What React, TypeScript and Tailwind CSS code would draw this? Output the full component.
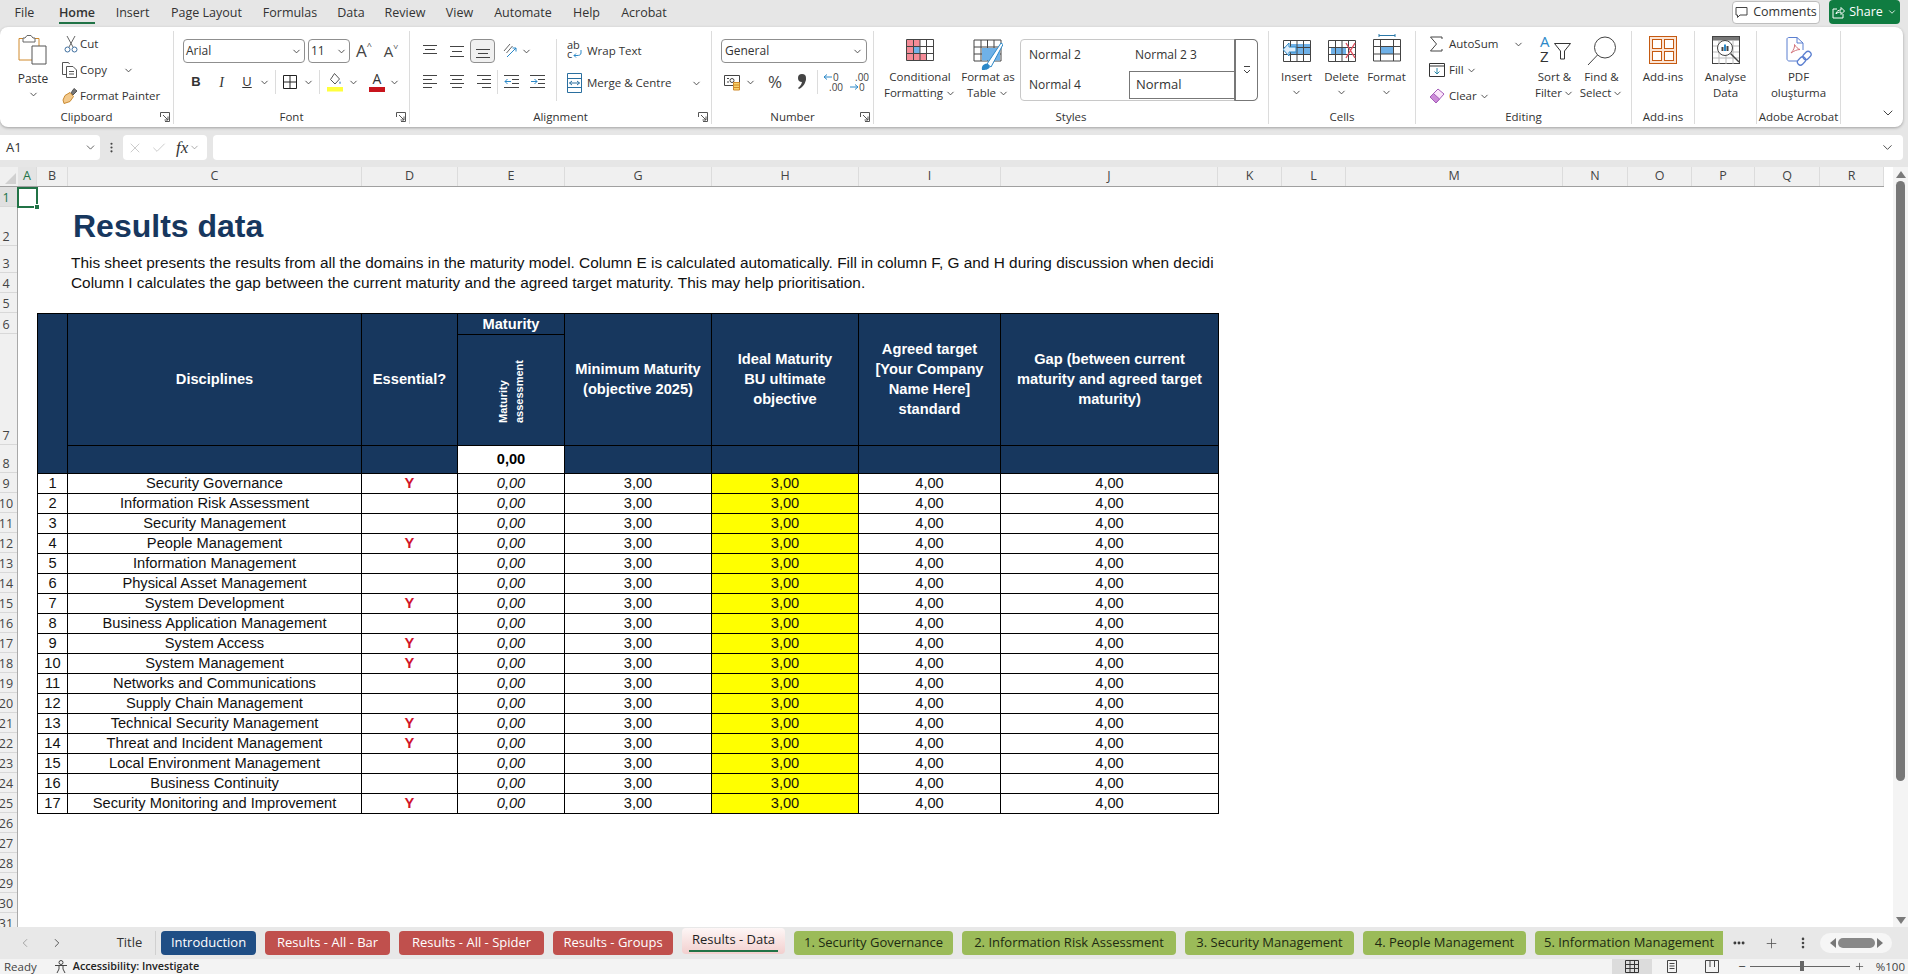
import React from 'react';
import { ChevronDown, ChevronLeft, ChevronRight, Check, X, Plus, MoreVertical, MoreHorizontal } from 'lucide-react';

const ink = '#444';

function Chev({ className = '' }: { className?: string }) {
  return <ChevronDown className={`h-[11px] w-[11px] shrink-0 text-[#444] ${className}`} strokeWidth={2} />;
}

// little box with arrow, bottom right of a ribbon group
function Launcher() {
  return (
    <svg width="10" height="10" viewBox="0 0 10 10" fill="none" stroke="#555" strokeWidth="1">
      <path d="M0.5 5V0.5H9.5V9.5H5" />
      <path d="M3 3L8 8M8 4.5V8H4.5" />
    </svg>
  );
}

function Group({ label, className, launcher, children }: { label?: string; className: string; launcher?: boolean; children: React.ReactNode }) {
  return (
    <div className={`relative my-[4px] flex h-[93px] shrink-0 flex-col border-r border-[#dcdcdc] ${className}`}>
      <div className="h-[79px]">{children}</div>
      <div className="relative flex h-[14px] items-center justify-center text-[11.5px] text-[#333]">
        {label}
        {launcher && (
          <span className="absolute right-[3px] top-[2px]">
            <Launcher />
          </span>
        )}
      </div>
    </div>
  );
}

function Lines({ rows }: { rows: [number, number, number][] }) {
  return (
    <svg width="16" height="16" viewBox="0 0 16 16" stroke={ink} strokeWidth="1">
      {rows.map(([y, a, b], i) => (
        <path key={i} d={`M${a} ${y + 0.5}H${b}`} />
      ))}
    </svg>
  );
}

function Cell3({ children }: { children: React.ReactNode }) {
  return <div className="flex h-[24px] w-[27px] shrink-0 items-center justify-center">{children}</div>;
}

function PasteIcon() {
  return (
    <svg width="30" height="32" viewBox="0 0 30 32" fill="none">
      <path d="M1 4.5H21V26H1Z" fill="#fff" stroke="#d08a2c" />
      <path d="M7 4L9 1.5H13L15 4H17V8H5V4Z" fill="#fff" stroke="#666" />
      <path d="M14 12H28V30H14Z" fill="#fff" stroke="#555" />
    </svg>
  );
}

function CutIcon() {
  return (
    <svg width="14" height="18" viewBox="0 0 14 18" fill="none" stroke="#3f6f9f">
      <path d="M3 1L9 12M11 1L5 12" stroke="#666" />
      <circle cx="3.5" cy="14.5" r="2.5" />
      <circle cx="10.5" cy="14.5" r="2.5" />
    </svg>
  );
}

function CopyIcon() {
  return (
    <svg width="18" height="18" viewBox="0 0 18 18" fill="none" stroke="#555">
      <path d="M1.5 1.5H7.5L8.5 3M1.5 1.5V13.5H5" />
      <path d="M5.5 5.5H12L15.5 9V16.5H5.5Z" fill="#fff" />
      <path d="M8 10.5H13M8 13H13" />
    </svg>
  );
}

function PainterIcon() {
  return (
    <svg width="18" height="18" viewBox="0 0 18 18" fill="none">
      <path d="M10 6L13 1.5L16 4L12 8Z" fill="#777" stroke="#555" />
      <path d="M4 8.5L9 5.5L12.5 9.5L9 14.5L3 16.5L2 13Z" fill="#f3c98b" stroke="#c98a32" />
    </svg>
  );
}

function BorderIcon() {
  return (
    <svg width="16" height="16" viewBox="0 0 16 16" fill="none" stroke="#222">
      <path d="M1.5 1.5H14.5V14.5H1.5ZM8 1.5V14.5M1.5 8H14.5" />
    </svg>
  );
}

function FillIcon() {
  return (
    <svg width="16" height="20" viewBox="0 0 16 20" fill="none">
      <path d="M7.5 1.5L12.5 7L8 12L3.5 7.5Z" fill="#fff" stroke="#555" />
      <path d="M13 9L14 11.5L12 11.5Z" fill="#3f7fbf" />
      <rect x="0" y="15" width="16" height="4.5" fill="#ffff3c" />
    </svg>
  );
}

function FontColorIcon() {
  return (
    <div className="flex h-[22px] w-[16px] flex-col items-center">
      <span className="text-[14px] leading-[15px] text-[#333]">A</span>
      <span className="mt-[1px] h-[5px] w-[16px] bg-[#c8141c]" />
    </div>
  );
}

function OrientIcon() {
  return (
    <svg width="18" height="18" viewBox="0 0 18 18" fill="none">
      <path d="M3 9L9 2M5.5 11L11.5 4" stroke="#666" />
      <path d="M6 15L15 6M15 6H11.5M15 6V9.5" stroke="#2b88c8" />
    </svg>
  );
}

function IndentIcon({ dir }: { dir: 'in' | 'out' }) {
  return (
    <svg width="16" height="16" viewBox="0 0 16 16" fill="none" stroke={ink}>
      <path d="M0 1.5H15M8 5.5H15M8 9.5H15M0 13.5H15" />
      {dir === 'out' ? <path d="M7 7.5H1M3.5 5L1 7.5L3.5 10" stroke="#2b88c8" /> : <path d="M1 7.5H7M4.5 5L7 7.5L4.5 10" stroke="#2b88c8" />}
    </svg>
  );
}

function WrapIcon() {
  return (
    <svg width="15" height="20" viewBox="0 0 15 20" fill="none" fontSize="11" fontFamily="Open Sans, sans-serif">
      <text x="0" y="8" fill="#333">ab</text>
      <text x="0" y="17" fill="#333">c</text>
      <path d="M14 9V12C14 14 12 14.5 10 14.5H7M9 12.5L7 14.5L9 16.5" stroke="#2b88c8" />
    </svg>
  );
}

function MergeIcon() {
  return (
    <svg width="15" height="20" viewBox="0 0 15 20" fill="none" stroke="#2a6f9f">
      <path d="M0.5 0.5H14.5V19.5H0.5ZM0.5 5.5H14.5M0.5 14.5H14.5" />
      <path d="M2.5 10H12.5M5 8L2.5 10L5 12M10 8L12.5 10L10 12" />
    </svg>
  );
}

function MoneyIcon() {
  return (
    <svg width="18" height="18" viewBox="0 0 18 18" fill="none">
      <path d="M0.5 2.5H15.5V12.5H0.5Z" stroke="#444" />
      <path d="M3 5.5H5M3 9H5" stroke="#444" />
      <circle cx="8" cy="7.5" r="2" stroke="#444" />
      <path d="M9.5 9.5H15.5V17H9.5Z" fill="#f7d36b" stroke="#d08a2c" />
      <path d="M9.5 12H15.5M9.5 14.5H15.5" stroke="#d08a2c" />
    </svg>
  );
}

function CommaIcon() {
  return (
    <svg width="10" height="18" viewBox="0 0 10 18" fill="#444">
      <circle cx="5" cy="5" r="4" />
      <path d="M9 5C9 10 6 14 2 16L1 15C4 13 5 10 5 8Z" />
    </svg>
  );
}

function DecimalIcon({ dir }: { dir: 'more' | 'less' }) {
  return (
    <svg width="22" height="22" viewBox="0 0 22 22" fill="none" fontSize="10" fontFamily="Open Sans, sans-serif">
      {dir === 'more' ? (
        <>
          <path d="M10 6H2M5 3.5L2 6L5 8.5" stroke="#2b88c8" />
          <text x="11" y="9.5" fill="#444">0</text>
          <text x="7" y="19.5" fill="#444">.00</text>
        </>
      ) : (
        <>
          <text x="7" y="9.5" fill="#444">.00</text>
          <path d="M2 16H10M7 13.5L10 16L7 18.5" stroke="#2b88c8" />
          <text x="11" y="19.5" fill="#444">0</text>
        </>
      )}
    </svg>
  );
}

function SigmaIcon() {
  return (
    <svg width="14" height="16" viewBox="0 0 14 16" fill="none" stroke="#444">
      <path d="M13 3V1H1.5L7.5 8L1.5 15H13V13" />
    </svg>
  );
}

function GridIcon({ children, over }: { children?: React.ReactNode; over?: React.ReactNode }) {
  return (
    <svg width={28} height={22} viewBox="0 0 28 22" fill="none">
      {children}
      <path d="M0.5 0.5H27.5V21.5H0.5ZM7.5 0.5V21.5M14 0.5V21.5M20.5 0.5V21.5M0.5 7.5H27.5M0.5 14.5H27.5" stroke="#444" />
      {over}
    </svg>
  );
}

function CondIcon() {
  return (
    <GridIcon>
      <rect x="1" y="1" width="13" height="6.5" fill="#f48b97" />
      <rect x="7.5" y="7.5" width="6.5" height="7" fill="#6fb1e8" />
      <rect x="1" y="7.5" width="6.5" height="7" fill="#f48b97" />
      <rect x="1" y="14.5" width="19.5" height="7" fill="#f48b97" />
    </GridIcon>
  );
}

function TableIcon() {
  return (
    <svg width="30" height="32" viewBox="0 0 30 32" fill="none">
      <path d="M1 1H28V22H1ZM8 1V22M14.5 1V22M21 1V22M1 8H28M1 15H28" stroke="#444" />
      <rect x="9" y="9" width="18" height="12.5" fill="#6fb1e8" />
      <path d="M14 25L28 4L30 5.5L18 28Z" fill="#fff" stroke="#2b88c8" />
      <path d="M9 31C8 26 12 24 15 25L17 28C15 31 12 31 9 31Z" fill="#2b88c8" />
    </svg>
  );
}

function InsertIcon() {
  return (
    <GridIcon over={<path d="M6 3L0 9.5L6 16V12H13V7H6Z" fill="#dfeefb" stroke="#2b88c8" />}>
      <rect x="7" y="4" width="21" height="11" fill="#6fb1e8" />
    </GridIcon>
  );
}

function DeleteIcon() {
  return (
    <GridIcon over={<path d="M18 3L27 18M27 3L18 18" stroke="#e2505f" strokeWidth="1.4" />}>
      <rect x="3" y="7" width="15" height="8" fill="#6fb1e8" />
    </GridIcon>
  );
}

function FormatIcon() {
  return (
    <svg width="28" height="28" viewBox="0 0 28 28" fill="none">
      <path d="M6 1.5H22M6 0V3M22 0V3" stroke="#2b78a8" />
      <rect x="7" y="12" width="14" height="8" fill="#6fb1e8" />
      <path d="M0.5 5.5H27.5V27H0.5ZM7.5 5.5V27M20.5 5.5V27M0.5 12.5H27.5M0.5 20H27.5" stroke="#444" />
    </svg>
  );
}

function FillDownIcon() {
  return (
    <svg width="16" height="14" viewBox="0 0 16 14" fill="none">
      <path d="M0.5 0.5H15.5V13.5H0.5ZM0.5 3H15.5" stroke="#333" />
      <path d="M8 5V11M5.5 8.5L8 11L10.5 8.5" stroke="#2b88a8" />
    </svg>
  );
}

function EraserIcon() {
  return (
    <svg width="16" height="16" viewBox="0 0 16 16" fill="none">
      <path d="M1 9L9 1L15 6L7 15Z" fill="#fbe6fb" stroke="#a45cb8" />
      <path d="M1 9L4.5 5.5L10.5 11L7 15Z" fill="#cc8ad8" stroke="#a45cb8" />
    </svg>
  );
}

function SortIcon() {
  return (
    <svg width="32" height="28" viewBox="0 0 32 28" fill="none" fontSize="15" fontFamily="Open Sans, sans-serif">
      <text x="1" y="11" fill="#2b88c8">A</text>
      <text x="1" y="26" fill="#333">Z</text>
      <path d="M15.5 7.5H31.5L25.5 15V23H21.5V15Z" stroke="#333" />
    </svg>
  );
}

function FindIcon() {
  return (
    <svg width="30" height="30" viewBox="0 0 30 30" fill="none" stroke="#444">
      <circle cx="18" cy="11.5" r="10.5" />
      <path d="M10.5 19L1 29" />
    </svg>
  );
}

function AddinsIcon() {
  return (
    <svg width="28" height="28" viewBox="0 0 28 28" fill="none">
      <rect x="0.5" y="0.5" width="27" height="27" fill="#fbe5d6" stroke="#c55a11" />
      <rect x="3.5" y="3.5" width="9" height="9" fill="#fff" stroke="#c55a11" />
      <rect x="15.5" y="3.5" width="9" height="9" fill="#fff" stroke="#c55a11" />
      <rect x="3.5" y="15.5" width="9" height="9" fill="#fff" stroke="#c55a11" />
      <rect x="15.5" y="15.5" width="9" height="9" fill="#fff" stroke="#c55a11" />
    </svg>
  );
}

function AnalyseIcon() {
  return (
    <svg width="28" height="28" viewBox="0 0 28 28" fill="none">
      <rect x="0.5" y="0.5" width="27" height="27" stroke="#444" />
      <rect x="1" y="1" width="26" height="3.5" fill="#777" />
      <path d="M1 10H27M1 16H27M1 22H27M7 4V28M14 4V28M21 4V28" stroke="#bbb" />
      <circle cx="13" cy="12" r="7.5" fill="#fff" stroke="#444" />
      <rect x="9.5" y="11" width="2" height="4" fill="#444" />
      <rect x="12" y="8.5" width="2" height="6.5" fill="#2b88c8" />
      <rect x="14.5" y="10" width="2" height="5" fill="#444" />
      <path d="M18.5 17.5L27 26" stroke="#444" strokeWidth="1.4" />
    </svg>
  );
}

function PdfIcon() {
  return (
    <svg width="26" height="29" viewBox="0 0 26 29" fill="none">
      <path d="M1 2C1 1 2 0.5 3 0.5H11L17 6V13M1 2V22C1 23 2 24 3 24H11" stroke="#5b7fd0" />
      <path d="M11 0.5V6H17" stroke="#5b7fd0" />
      <path d="M5 16C8 13 9 9 8.5 7.5C10 10 12 12 14 12.5C11 12.5 8 14 5 16Z" stroke="#d3737b" />
      <rect x="18" y="14" width="6" height="9" rx="3" transform="rotate(45 21 18.5)" stroke="#5b7fd0" strokeWidth="1.3" />
      <rect x="12.5" y="19.5" width="6" height="9" rx="3" transform="rotate(45 15.5 24)" stroke="#5b7fd0" strokeWidth="1.3" />
    </svg>
  );
}

function Ribbon() {
  return (
    <div className="mr-[5px] flex h-[100px] shrink-0 rounded-[8px] bg-white shadow-[0_1px_3px_rgba(0,0,0,0.3)]">
      <Group label="Clipboard" className="w-[174px]" launcher>
        <div className="flex">
          <div className="flex w-[60px] flex-col items-center pl-[6px] pt-[3px]">
            <PasteIcon />
            <span className="mt-[5px] text-[12px] leading-[16px]">Paste</span>
            <Chev className="mt-[2px]" />
          </div>
          <div className="flex flex-col">
            <div className="flex h-[26px] items-center"><span className="flex w-[20px] justify-center pl-[2px]"><CutIcon /></span><span>Cut</span></div>
            <div className="flex h-[26px] items-center"><span className="flex w-[20px] justify-center"><CopyIcon /></span><span>Copy</span><Chev className="ml-[16px]" /></div>
            <div className="flex h-[26px] items-center"><span className="flex w-[20px] justify-center"><PainterIcon /></span><span>Format Painter</span></div>
          </div>
        </div>
      </Group>

      <Group label="Font" className="w-[236px]" launcher>
        <div className="pl-[9px] pt-[8px]">
          <div className="flex h-[24px] items-center">
            <div className="flex h-[24px] w-[122px] items-center justify-between rounded-[4px] border border-[#8f8f8f] px-[2px] text-[12px]">Arial<Chev /></div>
            <div className="ml-[3px] flex h-[24px] w-[42px] items-center justify-between rounded-[4px] border border-[#8f8f8f] px-[2px] text-[12px]">11<Chev /></div>
            <span className="ml-[2px] flex w-[24px] items-start justify-center text-[17px] leading-[20px] text-[#444]">A<span className="text-[9px] leading-[10px]">^</span></span>
            <span className="ml-[3px] flex w-[24px] items-start justify-center text-[15px] leading-[20px] text-[#444]">A<span className="rotate-180 text-[9px] leading-[10px]">^</span></span>
          </div>
          <div className="mt-[7px] flex h-[24px] items-center">
            <span className="w-[26px] text-center font-['Liberation_Sans',sans-serif] text-[13px] font-bold text-[#333]">B</span>
            <span className="w-[25px] text-center font-['Liberation_Serif',serif] text-[14px] italic text-[#333]">I</span>
            <span className="w-[26px] text-center text-[13px] text-[#333] underline">U</span>
            <Chev className="ml-[-1px]" />
            <span className="ml-[5px] h-[24px] w-px bg-[#dcdcdc]" />
            <span className="ml-[6px]"><BorderIcon /></span>
            <Chev className="ml-[5px]" />
            <span className="ml-[5px] h-[24px] w-px bg-[#dcdcdc]" />
            <span className="ml-[7px]"><FillIcon /></span>
            <Chev className="ml-[5px]" />
            <span className="ml-[10px]"><FontColorIcon /></span>
            <Chev className="ml-[4px]" />
          </div>
        </div>
      </Group>

      <Group label="Alignment" className="w-[302px]" launcher>
        <div className="flex pt-[8px]">
          <div className="w-[146px] pl-[6px]">
            <div className="flex h-[24px] items-center">
              <Cell3><Lines rows={[[2, 1, 15], [6, 3, 13], [10, 1, 15]]} /></Cell3>
              <Cell3><Lines rows={[[3, 1, 15], [8, 3, 13], [13, 1, 15]]} /></Cell3>
              <div className="flex h-[24px] w-[25px] items-center justify-center rounded-[4px] border border-[#8f8f8f] bg-[#f0f0f0]"><Lines rows={[[6, 1, 15], [10, 3, 13], [14, 1, 15]]} /></div>
              <span className="ml-[6px]"><OrientIcon /></span>
              <Chev className="ml-[2px]" />
            </div>
            <div className="mt-[7px] flex h-[24px] items-center">
              <Cell3><Lines rows={[[1, 1, 15], [5, 1, 10], [9, 1, 15], [13, 1, 10]]} /></Cell3>
              <Cell3><Lines rows={[[1, 1, 15], [5, 3, 13], [9, 1, 15], [13, 3, 13]]} /></Cell3>
              <Cell3><Lines rows={[[1, 1, 15], [5, 6, 15], [9, 1, 15], [13, 6, 15]]} /></Cell3>
              <span className="h-[24px] w-px bg-[#dcdcdc]" />
              <span className="ml-[6px]"><IndentIcon dir="out" /></span>
              <span className="ml-[10px]"><IndentIcon dir="in" /></span>
            </div>
          </div>
          <div className="h-[62px] border-l border-[#dcdcdc] pl-[10px]">
            <div className="flex h-[24px] items-center gap-[5px]"><WrapIcon /><span>Wrap Text</span></div>
            <div className="mt-[8px] flex h-[24px] items-center gap-[5px]"><MergeIcon /><span>Merge &amp; Centre</span><Chev className="ml-[14px]" /></div>
          </div>
        </div>
      </Group>

      <Group label="Number" className="w-[162px]" launcher>
        <div className="pl-[9px] pt-[8px]">
          <div className="flex h-[24px] w-[146px] items-center justify-between rounded-[4px] border border-[#8f8f8f] px-[3px] text-[12px]">General<Chev /></div>
          <div className="mt-[7px] flex h-[24px] items-center">
            <span className="ml-[3px]"><MoneyIcon /></span>
            <Chev className="ml-[3px]" />
            <span className="ml-[8px] w-[22px] text-center text-[17px] text-[#444]">%</span>
            <span className="ml-[4px] flex w-[24px] justify-center"><CommaIcon /></span>
            <span className="ml-[3px] h-[24px] w-px bg-[#dcdcdc]" />
            <span className="ml-[4px]"><DecimalIcon dir="more" /></span>
            <span className="ml-[4px]"><DecimalIcon dir="less" /></span>
          </div>
        </div>
      </Group>

      <Group label="Styles" className="w-[395px]">
        <div className="flex pl-[12px] pt-[8px]">
          <div className="flex w-[68px] flex-col items-center text-center leading-[16px]">
            <CondIcon />
            <span className="mt-[8px]">Conditional</span>
            <span className="flex items-center gap-[2px]">Formatting<Chev /></span>
          </div>
          <div className="flex w-[68px] flex-col items-center text-center leading-[16px]">
            <span className="h-[30px]"><TableIcon /></span>
            <span>Format as</span>
            <span className="flex items-center gap-[2px]">Table<Chev /></span>
          </div>
          <div className="ml-[-2px] flex h-[62px] w-[238px] rounded-[4px] border border-[#c8c8c8]">
            <div className="grid w-[215px] grid-cols-[107px_107px] grid-rows-[30px_30px] items-center text-[12px]">
              <span className="pl-[8px]">Normal 2</span>
              <span className="pl-[7px]">Normal 2 3</span>
              <span className="pl-[8px]">Normal 4</span>
              <span className="ml-[1px] flex h-[28px] items-center border border-[#777] pl-[6px] text-[13px]">Normal</span>
            </div>
            <div className="flex w-[23px] items-center justify-center rounded-r-[4px] border-l border-[#777] outline outline-1 outline-[#777]">
              <svg width="10" height="10" viewBox="0 0 10 10" fill="none" stroke="#444"><path d="M2 1.5H8M2 5L5 8L8 5" /></svg>
            </div>
          </div>
        </div>
      </Group>

      <Group label="Cells" className="w-[147px]">
        <div className="flex justify-center pr-[1px]">
          {[['Insert', <InsertIcon key="i" />], ['Delete', <DeleteIcon key="d" />], ['Format', <FormatIcon key="f" />]].map(([name, icon], i) => (
            <div key={i} className="flex w-[45px] flex-col items-center">
              <div className="flex h-[36px] items-end pb-[5px]">{icon}</div>
              <span className="mt-[2px] leading-[16px]">{name}</span>
              <Chev className="mt-[2px]" />
            </div>
          ))}
        </div>
      </Group>

      <Group label="Editing" className="w-[216px]">
        <div className="flex">
          <div className="flex w-[115px] flex-col pl-[13px]">
            <div className="flex h-[26px] items-center"><span className="w-[20px]"><SigmaIcon /></span><span>AutoSum</span><Chev className="ml-[15px]" /></div>
            <div className="flex h-[26px] items-center"><span className="w-[20px]"><FillDownIcon /></span><span>Fill</span><Chev className="ml-[2px]" /></div>
            <div className="flex h-[26px] items-center"><span className="w-[20px]"><EraserIcon /></span><span>Clear</span><Chev className="ml-[2px]" /></div>
          </div>
          <div className="flex w-[47px] flex-col items-center pt-[5px] leading-[16px]">
            <SortIcon />
            <span className="mt-[5px]">Sort &amp;</span>
            <span className="flex items-center gap-[1px]">Filter<Chev /></span>
          </div>
          <div className="flex w-[47px] flex-col items-center pt-[5px] leading-[16px]">
            <FindIcon />
            <span className="mt-[3px]">Find &amp;</span>
            <span className="flex items-center gap-[1px]">Select<Chev /></span>
          </div>
        </div>
      </Group>

      <Group label="Add-ins" className="w-[63px]">
        <div className="flex flex-col items-center pt-[5px] leading-[16px]">
          <AddinsIcon />
          <span className="mt-[5px]">Add-ins</span>
        </div>
      </Group>

      <Group className="w-[62px]">
        <div className="flex flex-col items-center pt-[5px] leading-[16px]">
          <AnalyseIcon />
          <span className="mt-[5px]">Analyse</span>
          <span>Data</span>
        </div>
      </Group>

      <Group label="Adobe Acrobat" className="w-[84px]">
        <div className="flex flex-col items-center pt-[6px] leading-[16px]">
          <PdfIcon />
          <span className="mt-[3px]">PDF</span>
          <span>oluşturma</span>
        </div>
      </Group>

      <div className="flex flex-1 items-end justify-end pb-[6px] pr-[7px]">
        <ChevronDown className="h-[16px] w-[16px] text-[#444]" strokeWidth={1.5} />
      </div>
    </div>
  );
}

function TopTabs() {
  const tabs = [
    ['File', 'w-[49px]'], ['Home', 'w-[56px]'], ['Insert', 'w-[55px]'], ['Page Layout', 'w-[93px]'], ['Formulas', 'w-[74px]'],
    ['Data', 'w-[48px]'], ['Review', 'w-[60px]'], ['View', 'w-[49px]'], ['Automate', 'w-[78px]'], ['Help', 'w-[49px]'], ['Acrobat', 'w-[66px]'],
  ];
  return (
    <div className="flex h-[27px] shrink-0 items-start">
      <div className="flex pl-0">
        {tabs.map(([t, w]) => (
          <div key={t} className={`relative flex h-[26px] items-center justify-center text-[12.5px] text-[#333] ${w} ${t === 'Home' ? 'font-semibold' : ''}`}>
            {t}
            {t === 'Home' && <span className="absolute bottom-[2px] left-[10px] right-[10px] h-[2px] bg-[#217346]" />}
          </div>
        ))}
      </div>
      <div className="ml-auto flex items-start gap-[9px] pr-[8px]">
        <div className="mt-[1px] flex h-[23px] w-[88px] items-center justify-center gap-[5px] rounded-[4px] border border-[#bdbdbd] bg-white text-[12.5px]">
          <svg width="13" height="13" viewBox="0 0 13 13" fill="none" stroke="#444"><path d="M1 1.5H12V9H5L2.5 11.5V9H1Z" /></svg>
          Comments
        </div>
        <div className="flex h-[24px] w-[71px] items-center justify-center gap-[4px] rounded-[4px] bg-[#107c41] text-[12.5px] text-white">
          <svg width="13" height="13" viewBox="0 0 13 13" fill="none" stroke="#fff"><path d="M5 3H1V12H11V8M4 8C4 5 7 4 9 4V1.5L12.5 5L9 8.5V6C7 6 5 6.5 4 8Z" /></svg>
          Share
          <ChevronDown className="h-[10px] w-[10px]" strokeWidth={2} />
        </div>
      </div>
    </div>
  );
}

function FormulaBar() {
  return (
    <div className="mr-[5px] mt-[8px] flex h-[25px] shrink-0 items-stretch">
      <div className="flex w-[100px] items-center justify-between rounded-r-[4px] bg-white pl-[6px] pr-[3px] text-[13px]">
        A1
        <ChevronDown className="h-[13px] w-[13px] text-[#444]" strokeWidth={1.5} />
      </div>
      <div className="flex w-[23px] items-center justify-center"><MoreVertical className="h-[13px] w-[13px] text-[#444]" /></div>
      <div className="flex w-[84px] items-center rounded-[4px] bg-white pl-[4px]">
        <X className="h-[16px] w-[16px] text-[#c4c4c4]" strokeWidth={1.3} />
        <Check className="ml-[8px] h-[16px] w-[16px] text-[#c4c4c4]" strokeWidth={1.3} />
        <span className="ml-[9px] font-['Liberation_Serif',serif] text-[17px] italic text-[#333]">fx</span>
        <ChevronDown className="ml-[1px] h-[11px] w-[11px] text-[#888]" strokeWidth={1.5} />
      </div>
      <div className="ml-[6px] flex flex-1 items-center justify-end rounded-[4px] bg-white pr-[8px]">
        <ChevronDown className="h-[15px] w-[15px] text-[#444]" strokeWidth={1.5} />
      </div>
    </div>
  );
}

const columns: [string, string][] = [
  ['A', 'w-[19px] text-[#217346] bg-[#e4e4e4]'], ['B', 'w-[31px]'], ['C', 'w-[294px]'], ['D', 'w-[96px]'], ['E', 'w-[107px]'], ['G', 'w-[147px]'], ['H', 'w-[147px]'],
  ['I', 'w-[142px]'], ['J', 'w-[217px]'], ['K', 'w-[64px]'], ['L', 'w-[64px]'], ['M', 'w-[217px]'], ['N', 'w-[65px]'], ['O', 'w-[64px]'], ['P', 'w-[63px]'], ['Q', 'w-[65px]'], ['R', 'w-[64px]'],
];

const rowHeights: [number, string][] = [
  [1, 'h-[20px]'], [2, 'h-[39px]'], [3, 'h-[27px]'], [4, 'h-[20px]'], [5, 'h-[20px]'], [6, 'h-[21px]'], [7, 'h-[111px]'], [8, 'h-[28px]'],
  ...Array.from({ length: 23 }, (_, i): [number, string] => [i + 9, 'h-[20px]']),
];

const disciplines: [string, boolean][] = [
  ['Security Governance', true],
  ['Information Risk Assessment', false],
  ['Security Management', false],
  ['People Management', true],
  ['Information Management', false],
  ['Physical Asset Management', false],
  ['System Development', true],
  ['Business Application Management', false],
  ['System Access', true],
  ['System Management', true],
  ['Networks and Communications', false],
  ['Supply Chain Management', false],
  ['Technical Security Management', true],
  ['Threat and Incident Management', true],
  ['Local Environment Management', false],
  ['Business Continuity', false],
  ['Security Monitoring and Improvement', true],
];

function ResultsTable() {
  const th = 'border border-black bg-[#17375e] p-0 text-center align-middle font-bold text-white';
  const td = 'border border-black p-0 text-center align-middle';
  const multi = 'block pb-[2px] leading-[20px]';
  return (
    <table className="ml-[19px] w-[1181px] table-fixed border-collapse font-['Liberation_Sans',Arial,sans-serif] text-[14.67px] leading-[19px] text-[#111]">
      <colgroup>
        <col className="w-[30px]" />
        <col className="w-[294px]" />
        <col className="w-[96px]" />
        <col className="w-[107px]" />
        <col className="w-[147px]" />
        <col className="w-[147px]" />
        <col className="w-[142px]" />
        <col className="w-[218px]" />
      </colgroup>
      <thead>
        <tr className="h-[21px]">
          <th rowSpan={3} className={th} />
          <th rowSpan={2} className={th}><span className={multi}>Disciplines</span></th>
          <th rowSpan={2} className={th}><span className={multi}>Essential?</span></th>
          <th className={th}>Maturity</th>
          <th rowSpan={2} className={th}><span className={`${multi} px-[6px]`}>Minimum Maturity (objective 2025)</span></th>
          <th rowSpan={2} className={th}><span className={`${multi} px-[20px]`}>Ideal Maturity BU ultimate objective</span></th>
          <th rowSpan={2} className={th}><span className={`${multi} px-[6px]`}>Agreed target [Your Company Name Here] standard</span></th>
          <th rowSpan={2} className={th}><span className={`${multi} px-[6px]`}>Gap (between current maturity and agreed target maturity)</span></th>
        </tr>
        <tr className="h-[111px]">
          <th className={th}>
            <span className="mt-[8px] inline-block rotate-180 text-left text-[11px] leading-[16px] [writing-mode:vertical-rl]">
              Maturity
              <br />
              assessment
            </span>
          </th>
        </tr>
        <tr className="h-[28px]">
          <th className={th} />
          <th className={th} />
          <th className="border border-black bg-white p-0 text-center align-middle font-bold text-black">0,00</th>
          <th className={th} />
          <th className={th} />
          <th className={th} />
          <th className={th} />
        </tr>
      </thead>
      <tbody>
        {disciplines.map(([name, essential], i) => (
          <tr key={name} className="h-[20px]">
            <td className={td}>{i + 1}</td>
            <td className={td}>{name}</td>
            <td className={`${td} font-bold text-[#d0142c]`}>{essential ? 'Y' : ''}</td>
            <td className={`${td} italic`}>0,00</td>
            <td className={td}>3,00</td>
            <td className={`${td} bg-[#ffff00]`}>3,00</td>
            <td className={td}>4,00</td>
            <td className={td}>4,00</td>
          </tr>
        ))}
      </tbody>
    </table>
  );
}

function Sheet() {
  return (
    <div className="mt-[7px] flex h-[760px] shrink-0 overflow-hidden bg-white">
      <div className="min-w-0 flex-1 overflow-hidden">
        <div className="flex h-[20px] border-b border-[#a0a0a0] bg-[#f0f0f0] text-[12.5px] text-[#444]">
          <div className="flex w-[18px] items-end justify-end p-[2px]">
            <span className="h-0 w-0 border-b-[11px] border-l-[11px] border-b-[#d0d0d0] border-l-transparent" />
          </div>
          {columns.map(([c, cls]) => (
            <div key={c} className={`flex shrink-0 items-center justify-center border-r border-[#dcdcdc] ${cls}`}>{c}</div>
          ))}
        </div>
        <div className="flex">
          <div className="w-[18px] shrink-0 border-r border-[#a8a8a8] bg-[#f0f0f0] text-[12.5px] leading-[16px] text-[#444]">
            {rowHeights.map(([n, h]) => (
              <div key={n} className={`flex items-end justify-center overflow-hidden border-b border-[#d8d8d8] pr-[5px] ${h} ${n === 1 ? 'bg-[#e0e0e0] text-[#217346]' : ''}`}>
                <span className="whitespace-nowrap">{n}</span>
              </div>
            ))}
          </div>
          <div className="relative flex-1 font-['Liberation_Sans',Arial,sans-serif]">
            <span className="absolute left-[-1px] top-0 h-[21px] w-[21px] border-2 border-[#217346]">
              <span className="absolute bottom-[-4px] right-[-4px] h-[6px] w-[6px] border border-white bg-[#217346]" />
            </span>
            <div className="h-[20px]" />
            <div className="flex h-[39px] w-[1200px] items-center pl-[55px] text-[32px] font-bold leading-[39px] text-[#17375e]">Results data</div>
            <div className="h-[27px] w-[1200px] overflow-hidden whitespace-nowrap pl-[53px] pt-[7px] text-[15.4px] leading-[20px] text-[#111]">
              This sheet presents the results from all the domains in the maturity model. Column E is calculated automatically. Fill in column F, G and H during discussion when decidi
            </div>
            <div className="h-[20px] w-[1200px] overflow-hidden whitespace-nowrap pl-[53px] text-[15.4px] leading-[20px] text-[#111]">
              Column I calculates the gap between the current maturity and the agreed target maturity. This may help prioritisation.
            </div>
            <div className="h-[20px]" />
            <ResultsTable />
          </div>
        </div>
      </div>
      <div className="flex w-[24px] shrink-0 flex-col items-end bg-white">
        <div className="flex h-[760px] w-[15px] flex-col items-center bg-[#f4f4f4] pt-[4px]">
          <span className="h-0 w-0 border-x-[5px] border-b-[7px] border-x-transparent border-b-[#7a7a7a]" />
          <span className="mt-[3px] h-[600px] w-[9px] rounded-[5px] bg-[#777]" />
          <span className="mt-auto mb-[3px] h-0 w-0 border-x-[5px] border-t-[7px] border-x-transparent border-t-[#7a7a7a]" />
        </div>
      </div>
    </div>
  );
}

const sheetTabs: [string, string][] = [
  ['Introduction', 'w-[95px] bg-[#1f4e85] text-white'],
  ['Results - All - Bar', 'w-[125px] bg-[#c0504d] text-white'],
  ['Results - All - Spider', 'w-[145px] bg-[#c0504d] text-white'],
  ['Results - Groups', 'w-[120px] bg-[#c0504d] text-white'],
];

const greenTabs: [string, string][] = [
  ['1. Security Governance', 'w-[159px]'],
  ['2. Information Risk Assessment', 'w-[214px]'],
  ['3. Security Management', 'w-[169px]'],
  ['4. People Management', 'w-[163px]'],
  ['5. Information Management', 'w-[188px]'],
];

function TabBar() {
  return (
    <div className="flex h-[32px] shrink-0 items-center bg-[#e8e8e8] text-[13px]">
      <div className="flex w-[104px] shrink-0 items-center pl-[18px]">
        <ChevronLeft className="h-[14px] w-[14px] text-[#999]" strokeWidth={1.5} />
        <ChevronRight className="ml-[18px] h-[14px] w-[14px] text-[#444]" strokeWidth={1.5} />
      </div>
      <div className="flex h-[24px] w-[52px] shrink-0 items-center justify-center border-r border-[#d0d0d0] text-[#333]">Title</div>
      <div className="ml-[5px] flex h-[32px] w-[1563px] shrink-0 items-center gap-[9px] overflow-hidden">
        {sheetTabs.map(([t, cls]) => (
          <div key={t} className={`flex h-[24px] shrink-0 items-center justify-center rounded-[4px] ${cls}`}>{t}</div>
        ))}
        <div className="relative mb-[4px] flex h-[26px] w-[103px] shrink-0 items-center justify-center rounded-[4px] bg-gradient-to-b from-[#fdf6f6] to-[#f2cfce] pb-[3px] text-[#222]">
          Results - Data
          <span className="absolute bottom-[2px] left-[7px] right-[7px] h-[2px] bg-[#217346]" />
        </div>
        {greenTabs.map(([t, w], i) => (
          <div key={t} className={`flex h-[24px] shrink-0 items-center justify-center bg-[#9bbb59] text-[#1d2a12] ${w} ${i === 4 ? 'rounded-l-[4px]' : 'rounded-[4px]'}`}>{t}</div>
        ))}
      </div>
      <div className="flex flex-1 items-center">
        <MoreHorizontal className="ml-[8px] h-[14px] w-[14px] text-[#333]" strokeWidth={3} />
        <Plus className="ml-[18px] h-[15px] w-[15px] text-[#555]" strokeWidth={1.3} />
        <MoreVertical className="ml-[17px] h-[14px] w-[14px] text-[#444]" strokeWidth={2.5} />
        <div className="ml-[10px] flex h-[20px] w-[72px] items-center justify-center gap-[2px] rounded-[10px] bg-[#f6f6f6]">
          <span className="h-0 w-0 border-y-[5px] border-r-[6px] border-y-transparent border-r-[#777]" />
          <span className="h-[10px] w-[37px] rounded-[5px] bg-[#888]" />
          <span className="h-0 w-0 border-y-[5px] border-l-[6px] border-y-transparent border-l-[#777]" />
        </div>
      </div>
    </div>
  );
}

function StatusBar() {
  return (
    <div className="flex h-[15px] shrink-0 items-center overflow-hidden bg-[#f3f3f3] text-[11.5px] text-[#444]">
      <span className="pl-[4px]">Ready</span>
      <svg className="ml-[17px]" width="14" height="14" viewBox="0 0 14 14" fill="none" stroke="#444">
        <circle cx="7" cy="2.5" r="2" />
        <path d="M1 5.5H13M5 5.5V9L3 13M9 5.5V9L11 13" />
      </svg>
      <span className="ml-[5px] text-[10.8px] font-semibold text-[#222]">Accessibility: Investigate</span>
      <div className="ml-auto flex h-[15px] items-center">
        <div className="flex h-[15px] w-[40px] items-center justify-center bg-[#dcdcdc]">
          <svg width="14" height="13" viewBox="0 0 14 13" fill="none" stroke="#333"><path d="M0.5 0.5H13.5V12.5H0.5ZM5 0.5V12.5M9.5 0.5V12.5M0.5 4.5H13.5M0.5 8.5H13.5" /></svg>
        </div>
        <div className="flex w-[40px] justify-center">
          <svg width="14" height="13" viewBox="0 0 14 13" fill="none" stroke="#444"><path d="M2.5 0.5H11.5V12.5H2.5ZM4.5 3.5H9.5M4.5 6H9.5M4.5 8.5H9.5" /></svg>
        </div>
        <div className="flex w-[40px] justify-center">
          <svg width="14" height="13" viewBox="0 0 14 13" fill="none" stroke="#444"><path d="M0.5 0.5H13.5V12.5H0.5ZM5 0.5V7M9.5 0.5V7" /></svg>
        </div>
        <span className="ml-[6px] mr-[4px] text-[13px] leading-[15px]">−</span>
        <div className="relative h-px w-[100px] bg-[#666]">
          <span className="absolute left-[50px] top-[-5px] h-[10px] w-[4px] bg-[#666]" />
        </div>
        <Plus className="ml-[4px] h-[11px] w-[11px] text-[#444]" strokeWidth={1.5} />
        <span className="ml-[11px] pr-[3px]">%100</span>
      </div>
    </div>
  );
}

export default function App() {
  return (
    <div className="flex h-screen w-screen flex-col overflow-hidden bg-[#e6e6e6] font-['Open_Sans',sans-serif] text-[11.5px] text-[#333]">
      <TopTabs />
      <Ribbon />
      <FormulaBar />
      <Sheet />
      <TabBar />
      <StatusBar />
    </div>
  );
}
